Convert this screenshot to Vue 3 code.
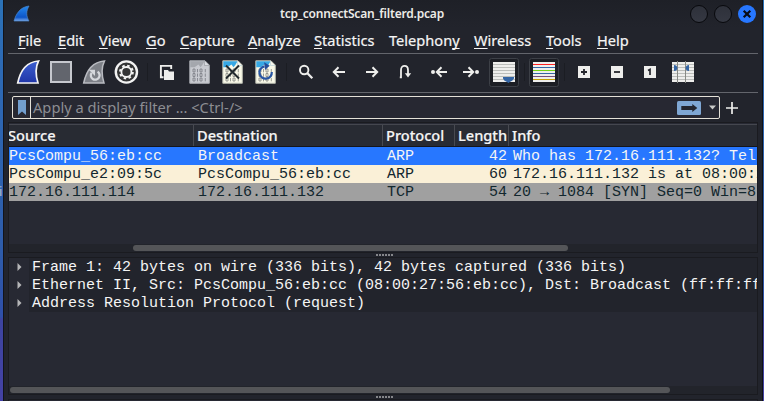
<script setup>
const menus = [
  { pre: '', key: 'F', post: 'ile', w: 40 },
  { pre: '', key: 'E', post: 'dit', w: 41 },
  { pre: '', key: 'V', post: 'iew', w: 47 },
  { pre: '', key: 'G', post: 'o', w: 34 },
  { pre: '', key: 'C', post: 'apture', w: 68 },
  { pre: '', key: 'A', post: 'nalyze', w: 66 },
  { pre: '', key: 'S', post: 'tatistics', w: 75 },
  { pre: 'Telephon', key: 'y', post: '', w: 85 },
  { pre: '', key: 'W', post: 'ireless', w: 72 },
  { pre: '', key: 'T', post: 'ools', w: 51 },
  { pre: '', key: 'H', post: 'elp', w: 40 },
]
const tools = [
  'start', 'stop', 'restart', 'options', '|', 'open', 'save', 'close', 'reload', '|',
  'find', 'back', 'forward', 'jump', 'first', 'last', 'autoscroll', '|', 'colorize', '|',
  'plus', 'minus', 'one', 'columns',
]
const stripes = ['#ff2020', '#3465a4', '#73d216', '#3465a4', '#75507b', '#c4a000']
const packets = [
  { cls: 'selected', src: 'PcsCompu_56:eb:cc', dst: 'Broadcast', proto: 'ARP', len: 42, info: 'Who has 172.16.111.132? Tel' },
  { cls: 'arp', src: 'PcsCompu_e2:09:5c', dst: 'PcsCompu_56:eb:cc', proto: 'ARP', len: 60, info: '172.16.111.132 is at 08:00:2' },
  { cls: 'syn', src: '172.16.111.114', dst: '172.16.111.132', proto: 'TCP', len: 54, info: '20 → 1084 [SYN] Seq=0 Win=8' },
]
const details = [
  'Frame 1: 42 bytes on wire (336 bits), 42 bytes captured (336 bits)',
  'Ethernet II, Src: PcsCompu_56:eb:cc (08:00:27:56:eb:cc), Dst: Broadcast (ff:ff:ff',
  'Address Resolution Protocol (request)',
]
</script>

<template>
  <div class="desktop">
    <span class="behind">i</span>
    <main class="window">
      <header class="titlebar">
        <svg class="logo" width="18" height="18" viewBox="0 0 18 18">
          <defs><linearGradient id="fin" x1="0" y1="0" x2="0" y2="1"><stop offset="0" stop-color="#2389ef" /><stop offset=".75" stop-color="#0d55c8" /><stop offset="1" stop-color="#79a7e8" /></linearGradient></defs>
          <path d="M1 16C3 9 7 2 16 1C13 6 13 11 16 16Z" fill="url(#fin)" stroke="#4c86cc" stroke-width=".7" />
        </svg>
        <span class="title">tcp_connectScan_filterd.pcap</span>
        <div class="controls">
          <i class="dot"></i><i class="dot"></i>
          <i class="dot close"><svg width="18" height="18" viewBox="0 0 18 18"><path d="M5.7 5.7L12.3 12.3M12.3 5.7L5.7 12.3" stroke="#080b14" stroke-width="2.2" /></svg></i>
        </div>
      </header>

      <nav class="menubar">
        <span v-for="m in menus" :key="m.key" :style="{ width: m.w + 'px' }">{{ m.pre }}<u>{{ m.key }}</u>{{ m.post }}</span>
      </nav>

      <div class="toolbar">
        <template v-for="(t, i) in tools" :key="i">
          <i v-if="t === '|'" class="sep"></i>
          <svg v-else width="33" height="30" viewBox="0 0 33 30" fill="none">
            <template v-if="t === 'start'">
              <defs><linearGradient id="blue" x1="0" y1="0" x2="0" y2="1"><stop offset="0" stop-color="#3c5fd0" /><stop offset="1" stop-color="#2036a8" /></linearGradient></defs>
              <path d="M5.7 26C8 15 14 5 26.5 4C23.5 10 23.5 18 26 26Z" fill="url(#blue)" stroke="#f4f4f4" stroke-width="1.7" />
            </template>
            <rect v-else-if="t === 'stop'" x="6" y="5" width="20" height="20" fill="#62656d" stroke="#c6c8ce" stroke-width="2" />
            <template v-else-if="t === 'restart'">
              <path d="M5.7 26C8 15 14 5 26.5 4C23.5 10 23.5 18 26 26Z" fill="#7d8087" stroke="#b9bbc1" stroke-width="1.5" />
              <path d="M19.6 14.6A4.4 4.4 0 1 1 13.6 15.8" stroke="#d5d7dc" stroke-width="2.3" />
              <path d="M10.8 12.8H17V19Z" fill="#d5d7dc" />
            </template>
            <template v-else-if="t === 'options'">
              <circle cx="15.4" cy="15" r="10.6" fill="#333435" stroke="#f3f3f3" stroke-width="2.4" />
              <circle cx="15.4" cy="15" r="6.4" stroke="#f3f3f3" stroke-width="2" stroke-dasharray="2.5 2.526" />
              <circle cx="15.4" cy="15" r="5" stroke="#f3f3f3" stroke-width="1.8" />
            </template>
            <template v-else-if="t === 'open'">
              <path d="M12.5 20.3H9.9V8.9H20.2V12" stroke="#eeeeec" stroke-width="1.9" />
              <path d="M13 13H17L18 14.5H23V23H13Z" fill="#eeeeec" />
            </template>
            <template v-else-if="t === 'save' || t === 'close' || t === 'reload'">
              <path d="M5.8 3.8H21L25.3 8.1V26.3H5.8Z" :fill="t === 'save' ? '#c8cad0' : '#f9f9e8'" :stroke="t === 'save' ? '#aaadb2' : '#b6b8ad'" />
              <path d="M6.3 4.3H20.5L18.5 7.8L16.5 10.3L14.5 7.5L10.5 10.3H6.3Z" :fill="t === 'save' ? '#a4a7ad' : '#36a8e4'" />
              <path d="M20.5 4V8.5H25" :fill="t === 'save' ? '#d9dbe0' : '#f6f6ee'" :stroke="t === 'save' ? '#999ca2' : '#b9d3da'" stroke-width=".7" />
              <g :stroke="t === 'save' ? '#777a82' : '#81847e'" stroke-width=".8">
                <path v-for="y in [12, 16.5, 21]" :key="y" :d="`M9 ${y}h2v3h-2zM13.5 ${y}v3.3M16 ${y}h2v3h-2zM21.3 ${y}v3.3`" />
              </g>
              <path v-if="t === 'close'" d="M9 8.5L22 21.5M22 8.5L9 21.5" stroke="#222a2d" stroke-width="2" />
              <template v-if="t === 'reload'">
                <path d="M14.5 9.4A6.2 6.2 0 1 0 21.8 15" stroke="#2856a3" stroke-width="2.2" />
                <path d="M14.2 5.2L19.7 8.8L15 13Z" fill="#244d98" />
              </template>
            </template>
            <template v-else-if="t === 'find'">
              <circle cx="14.2" cy="13" r="4.2" stroke="#eeeeec" stroke-width="1.9" />
              <path d="M17.2 16L22.3 21.2" stroke="#eeeeec" stroke-width="2.3" />
            </template>
            <path v-else-if="t === 'back'" d="M22 15H11.5M15.5 10.3L10.8 15L15.5 19.7" stroke="#eeeeec" stroke-width="2" />
            <path v-else-if="t === 'forward'" d="M10 15H20.5M16.5 10.3L21.2 15L16.5 19.7" stroke="#eeeeec" stroke-width="2" />
            <template v-else-if="t === 'jump'">
              <path d="M10.8 20.3H12V13C12 7.5 19 7.5 19 13V18" stroke="#eeeeec" stroke-width="1.8" />
              <path d="M15.8 16.2H22.2L19 20.5Z" fill="#eeeeec" />
            </template>
            <template v-else-if="t === 'first'">
              <path d="M25 15H15.5M19.5 10.3L14.8 15L19.5 19.7" stroke="#eeeeec" stroke-width="2" />
              <circle cx="11" cy="15" r="2" fill="#eeeeec" />
            </template>
            <template v-else-if="t === 'last'">
              <path d="M8 15H17.5M13.5 10.3L18.2 15L13.5 19.7" stroke="#eeeeec" stroke-width="2" />
              <circle cx="22" cy="15" r="2" fill="#eeeeec" />
            </template>
            <template v-else-if="t === 'autoscroll' || t === 'colorize'">
              <rect x="1.5" y="1.5" width="29" height="28" rx="2" fill="#1c1e24" stroke="#3d4047" />
              <rect x="5" y="5" width="22" height="20" fill="#eeeeec" />
              <path v-for="(c, n) in stripes" :key="n" :d="`M5 ${7.5 + n * 3}h22`" :stroke="t === 'colorize' ? c : '#bcbebb'" />
              <path v-if="t === 'autoscroll'" d="M15 20H26V21.5Q25 23.5 21.8 25L20.5 26L19 25Q15.5 23.5 15 21.5Z" fill="#3465a4" />
            </template>
            <template v-else-if="t === 'plus' || t === 'minus' || t === 'one'">
              <rect x="10" y="9" width="12" height="12" fill="#eeeeec" />
              <path v-if="t === 'plus'" d="M13 15H19M16 12V18" stroke="#24252c" stroke-width="1.8" />
              <path v-else-if="t === 'minus'" d="M13 15H19" stroke="#24252c" stroke-width="1.8" />
              <path v-else d="M14 13.5L16 12.4V18" stroke="#24252c" stroke-width="1.7" />
            </template>
            <template v-else>
              <rect x="5" y="5" width="22" height="20" fill="#eeeeec" />
              <path v-for="n in 6" :key="n" :d="`M5 ${4.5 + n * 3}h22`" stroke="#bcbebb" />
              <path d="M10.5 4V26M18.5 4V26" stroke="#888a85" />
              <path d="M7 8Q10 8 10.5 11Q10 14 7 14ZM22 8Q19 8 18.5 11Q19 14 22 14Z" fill="#3465a4" />
            </template>
          </svg>
        </template>
      </div>

      <div class="filterbar">
        <div class="filter">
          <span class="bookmark"><svg width="8" height="15" viewBox="0 0 8 15"><path d="M0 0H8V15L4 11.5L0 15Z" fill="#729fcf" /></svg></span>
          <span class="hint">Apply a display filter ... &lt;Ctrl-/&gt;</span>
          <svg class="apply" width="24" height="14" viewBox="0 0 24 14"><rect width="24" height="14" rx="1.5" fill="#7fa7d4" /><path d="M4.3 5H15.3V3L20.3 7L15.3 11V9H4.3Z" fill="#23252e" /></svg>
          <svg class="drop" width="7" height="5" viewBox="0 0 7 5"><path d="M0 .5H7L3.5 4.5Z" fill="#c9cac8" /></svg>
        </div>
        <svg width="12" height="12" viewBox="0 0 12 12"><path d="M0 6H12M6 0V12" stroke="#eeeeec" stroke-width="1.7" /></svg>
      </div>

      <section class="packets">
        <div class="row head"><span>Source</span><span>Destination</span><span>Protocol</span><span>Length</span><span>Info</span></div>
        <div v-for="p in packets" :key="p.cls" class="row" :class="p.cls">
          <span>{{ p.src }}</span><span>{{ p.dst }}</span><span>{{ p.proto }}</span><span class="len">{{ p.len }}</span><span>{{ p.info }}</span>
        </div>
        <div class="track"><i class="thumb upper"></i></div>
      </section>
      <div class="grip"><i v-for="n in 6" :key="n"></i></div>
      <section class="details">
        <div v-for="d in details" :key="d" class="node">
          <span class="twist"><svg width="5" height="8" viewBox="0 0 5 8"><path d="M.5 0L4.5 4L.5 8Z" fill="#b5b6b8" /></svg></span>
          <span class="label">{{ d }}</span>
        </div>
        <div class="track"><i class="thumb lower"></i></div>
      </section>
      <div class="grip"><i v-for="n in 6" :key="n"></i></div>
      <section class="bytes"></section>
    </main>
  </div>
</template>

<style>
body { background: #22242c; overflow: hidden; }
</style>

<style scoped>
* { box-sizing: border-box; }
.desktop {
  position: relative;
  width: 764px; height: 401px; overflow: hidden;
  padding: 0 1px 0 3px;
  background: linear-gradient(#2b72b7 0, #2d6ab4 60px, #2e5caa 250px, #2f4fa8 317px, #3d44a0 319px, #4442a4 401px);
  font-family: "Noto Sans", sans-serif;
}
.behind { position: absolute; left: -1px; top: 182px; font-size: 13px; color: #b8bdcb; }
.window {
  position: relative;
  display: flex; flex-direction: column;
  height: 401px;
  border-left: 1px solid #12141b; border-right: 1px solid #101116;
  background: #22242c;
  padding: 0 4px;
  color: #f5f5f5;
}
.titlebar { height: 28px; flex: none; display: grid; grid-template-columns: 84px 1fr 84px; align-items: center; margin: 0 -4px; background: linear-gradient(#1e2027, #22242c); }
.logo { margin-left: 9px; }
.title { text-align: center; font-size: 12px; line-height: 28px; font-weight: 600; letter-spacing: -.2px; padding-right: 42px; color: #ecebe7; }
.controls { display: flex; gap: 6px; justify-content: flex-end; padding-right: 6px; }
.dot { width: 18px; height: 18px; border-radius: 50%; border: 1px solid #08090d; background: linear-gradient(#2e313a, #353842); }
.dot svg { display: block; }
.dot.close { border: 0; background: #2777ff; }
.menubar { height: 26px; flex: none; display: flex; align-items: center; padding-left: 10px; font-size: 14.6px; line-height: 25px; white-space: nowrap; border-bottom: 1px solid #63656c; -webkit-text-stroke: .2px #f5f5f5; }
.menubar span { flex: none; }
.menubar u { text-decoration-thickness: 1px; text-underline-offset: 2px; text-decoration-skip-ink: none; }
.toolbar { height: 39px; flex: none; display: flex; align-items: center; padding: 0 0 2px 4px; border-bottom: 1px solid #63656c; }
.toolbar svg { flex: none; display: block; }
.sep { width: 7px; height: 18px; flex: none; background: linear-gradient(#1b1d23, #1b1d23) 3px 0 / 1px 18px no-repeat; }
.filterbar { height: 29px; flex: none; display: flex; align-items: center; gap: 6px; padding: 0 0 0 4px; }
.filter { width: 708px; height: 23px; display: flex; align-items: center; border: 1px solid #e4e1d8; border-radius: 2px; background: #272832; padding-right: 3px; }
.bookmark { width: 18px; height: 21px; border-right: 1px solid #e4e1d8; display: flex; align-items: center; justify-content: center; }
.hint { flex: 1; padding: 0 0 1px 2px; font-size: 14.67px; line-height: 20px; color: #8d8e92; }
.apply { margin-right: 8px; }
.packets { height: 131px; flex: none; display: flex; flex-direction: column; border: 1px solid #1a1b20; background: #272933; padding-top: 1px; }
.row { display: grid; grid-template-columns: 185px 189px 72px 54px 1fr; height: 18px; flex: none; font: 15px/20px "Liberation Mono", monospace; white-space: nowrap; overflow: hidden; }
.row span { padding-left: 4px; overflow: hidden; }
.row span:first-child { padding-left: 0; }
.row .len { padding: 0 2px 0 0; text-align: right; }
.row.head { height: 23px; font: 500 14.6px/20px "Noto Sans", sans-serif; background: #282b33; border-top: 1px solid #45474f; border-bottom: 1px solid #15161b; -webkit-text-stroke: .2px #f5f5f5; }
.head span { border-right: 1px solid #484a51; padding-left: 3px; }
.head span:first-child { margin-left: -1px; }
.head span:last-child { border: 0; }
.selected { background: #2777ff; }
.arp { background: #faf0d7; color: #12272e; }
.syn { background: #a0a0a0; color: #12272e; }
.track { height: 8px; margin-top: auto; background: #22242b; flex: none; padding-top: 1px; }
.thumb { display: block; height: 6px; border-radius: 3px; background: #545558; }
.upper { width: 435px; margin-left: 124px; }
.lower { width: 660px; margin-left: 1px; }
.grip { height: 4px; flex: none; display: flex; gap: 1px; align-items: center; justify-content: center; padding-left: 3px; }
.grip i { width: 2px; height: 2px; background: #85868a; }
.details { height: 138px; flex: none; display: flex; flex-direction: column; border: 1px solid #1a1b20; background: #272933; }
.node { height: 18px; flex: none; display: flex; font: 15px/20px "Liberation Mono", monospace; white-space: nowrap; overflow: hidden; }
.twist { width: 20px; flex: none; display: flex; align-items: center; padding-left: 8px; }
.label { flex: 1; overflow: hidden; background: #22242c; padding-left: 3px; }
.bytes { height: 2px; flex: none; border: 1px solid #1a1b20; border-bottom: 0; background: #272933; }
</style>
